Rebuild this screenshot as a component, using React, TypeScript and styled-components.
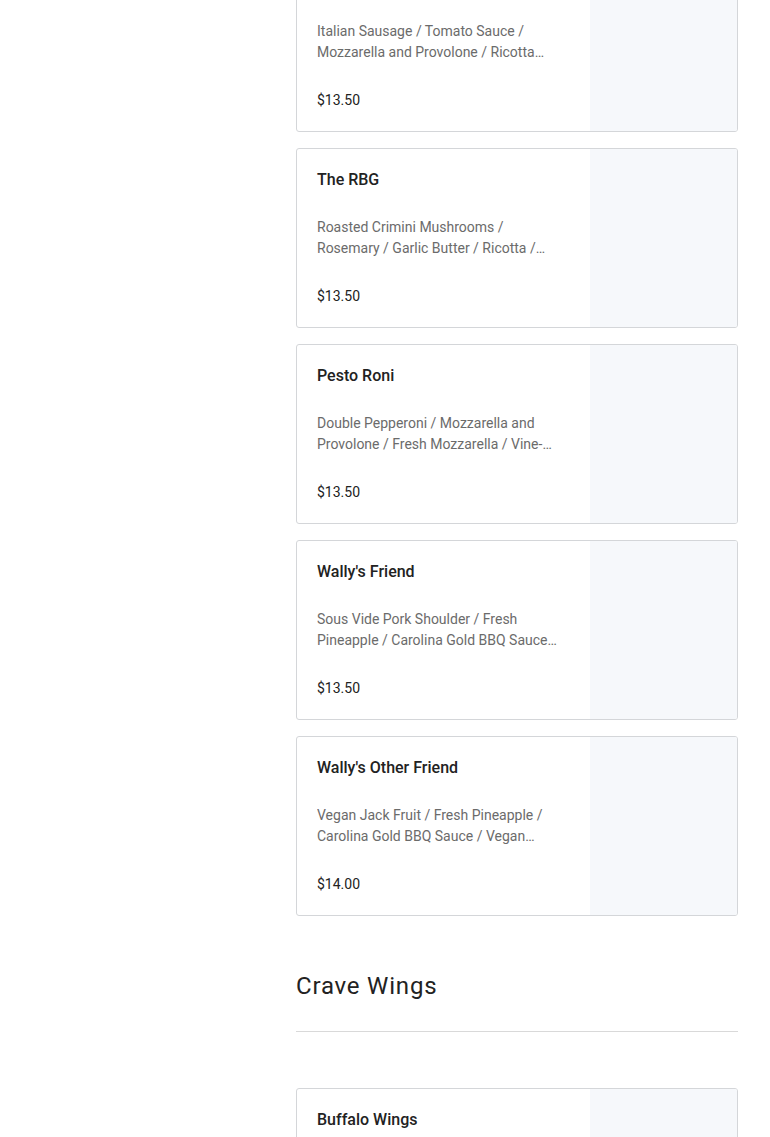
import React from "react"
import styled, { createGlobalStyle } from "styled-components"

const GlobalStyle = createGlobalStyle`
    body{
        margin: 0;
        background: #fff;
        font-family: Roboto, "Liberation Sans", Arial, sans-serif;
        color: #222;
    }
`

type Item = { name: string, desc: string, price: string }

const pizzas: Item[] = [
    { name: "The Godfather", desc: "Italian Sausage / Tomato Sauce / Mozzarella and Provolone / Ricotta Cheese / Basil", price: "$13.50" },
    { name: "The RBG", desc: "Roasted Crimini Mushrooms / Rosemary / Garlic Butter / Ricotta / Mozzarella", price: "$13.50" },
    { name: "Pesto Roni", desc: "Double Pepperoni / Mozzarella and Provolone / Fresh Mozzarella / Vine-Ripened Tomatoes / Pesto", price: "$13.50" },
    { name: "Wally's Friend", desc: "Sous Vide Pork Shoulder / Fresh Pineapple / Carolina Gold BBQ Sauce / Red Onion", price: "$13.50" },
    { name: "Wally's Other Friend", desc: "Vegan Jack Fruit / Fresh Pineapple / Carolina Gold BBQ Sauce / Vegan Mozzarella", price: "$14.00" },
]

const wings: Item[] = [
    { name: "Buffalo Wings", desc: "Crispy Wings / House Buffalo Sauce / Ranch or Bleu Cheese", price: "$12.00" },
]

export default function App() {
    return (
        <>
            <GlobalStyle />
            <Page>
                <Sidebar />
                <Menu>
                    <CardList>
                        {pizzas.map((p) => <MenuCard key={p.name} item={p} />)}
                    </CardList>
                    <Section>
                        <SectionTitle>Crave Wings</SectionTitle>
                        <Divider />
                    </Section>
                    <CardList>
                        {wings.map((p) => <MenuCard key={p.name} item={p} />)}
                    </CardList>
                </Menu>
            </Page>
        </>
    )
}

function MenuCard({ item }: { item: Item }) {
    return (
        <Card>
            <Info>
                <Name>{item.name}</Name>
                <Desc>{item.desc}</Desc>
                <Price>{item.price}</Price>
            </Info>
            <Photo />
        </Card>
    )
}

const Page = styled.div`
    display: grid;
    grid-template-columns: 232px 1fr;
    gap: 32px;
    padding: 0 32px;
    height: 1137px;
    overflow: hidden;
`

const Sidebar = styled.aside``

// the menu is scrolled: the first card starts above the top edge
const Menu = styled.main`
    margin-top: -48px;
`

const CardList = styled.div`
    display: flex;
    flex-direction: column;
    gap: 16px;
`

const Card = styled.div`
    display: flex;
    height: 180px;
    box-sizing: border-box;
    border: 1px solid #d4d6d9;
    border-radius: 3px;
    overflow: hidden;
    background: #fff;
`

const Info = styled.div`
    flex: 1;
    display: flex;
    flex-direction: column;
    padding: 21px 33px 20px 20px;
    min-width: 0;
`

const Name = styled.h3`
    margin: 0;
    font-size: 16px;
    line-height: 20px;
    font-weight: 500;
    color: #222;
`

const Desc = styled.p`
    margin: 27px 0 0;
    font-size: 14px;
    line-height: 21px;
    color: #6b6b6b;
    display: -webkit-box;
    -webkit-line-clamp: 2;
    -webkit-box-orient: vertical;
    overflow: hidden;
`

const Price = styled.div`
    margin-top: auto;
    font-size: 14px;
    line-height: 21px;
    color: #222;
`

const Photo = styled.div`
    width: 147px;
    flex-shrink: 0;
    background: #f6f8fb;
`

const Section = styled.section`
    padding-top: 54px;
    margin-bottom: 56px;
`

const SectionTitle = styled.h2`
    margin: 0;
    font-size: 24px;
    line-height: 32px;
    font-weight: 400;
    letter-spacing: 0.8px;
    color: #222;
`

const Divider = styled.hr`
    margin: 29px 0 0;
    border: 0;
    border-top: 1px solid #d9d9d9;
`
